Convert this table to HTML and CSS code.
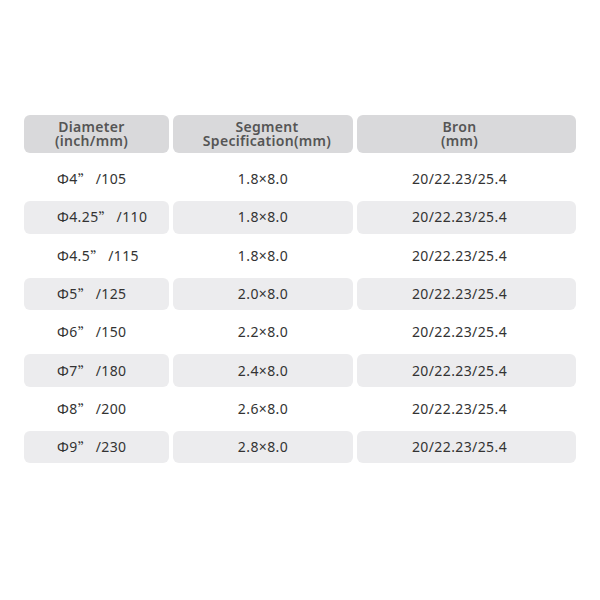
FILE: index.html
```html
<!DOCTYPE html>
<html>
<head>
<meta charset="utf-8">
<link rel="stylesheet" href="styles.css">
</head>
<body>
<div class="page">
  <div class="table">
    <div class="row head">
      <div class="cell c1"><span class="ln">Diameter</span><span class="ln">(inch/mm)</span></div>
      <div class="cell c2"><span class="ln">Segment</span><span class="ln">Specification(mm)</span></div>
      <div class="cell c3"><span class="ln">Bron</span><span class="ln">(mm)</span></div>
    </div>
    <div class="row">
      <div class="cell c1">Φ4<span class="q">”</span>/105</div>
      <div class="cell c2">1.8×8.0</div>
      <div class="cell c3">20/22.23/25.4</div>
    </div>
    <div class="row alt">
      <div class="cell c1">Φ4.25<span class="q">”</span>/110</div>
      <div class="cell c2">1.8×8.0</div>
      <div class="cell c3">20/22.23/25.4</div>
    </div>
    <div class="row">
      <div class="cell c1">Φ4.5<span class="q">”</span>/115</div>
      <div class="cell c2">1.8×8.0</div>
      <div class="cell c3">20/22.23/25.4</div>
    </div>
    <div class="row alt">
      <div class="cell c1">Φ5<span class="q">”</span>/125</div>
      <div class="cell c2">2.0×8.0</div>
      <div class="cell c3">20/22.23/25.4</div>
    </div>
    <div class="row">
      <div class="cell c1">Φ6<span class="q">”</span>/150</div>
      <div class="cell c2">2.2×8.0</div>
      <div class="cell c3">20/22.23/25.4</div>
    </div>
    <div class="row alt">
      <div class="cell c1">Φ7<span class="q">”</span>/180</div>
      <div class="cell c2">2.4×8.0</div>
      <div class="cell c3">20/22.23/25.4</div>
    </div>
    <div class="row">
      <div class="cell c1">Φ8<span class="q">”</span>/200</div>
      <div class="cell c2">2.6×8.0</div>
      <div class="cell c3">20/22.23/25.4</div>
    </div>
    <div class="row alt">
      <div class="cell c1">Φ9<span class="q">”</span>/230</div>
      <div class="cell c2">2.8×8.0</div>
      <div class="cell c3">20/22.23/25.4</div>
    </div>
  </div>
</div>
</body>
</html>
```
FILE: styles.css
```css
html, body {
  margin: 0;
  padding: 0;
  background: #ffffff;
}
.page {
  width: 600px;
  height: 600px;
  padding: 115px 24px 0 24px;
  box-sizing: border-box;
  font-family: "Noto Sans", "Open Sans", sans-serif;
  font-size: 14px;
  letter-spacing: 0.4px;
  color: #333333;
}
.table {
  display: flex;
  flex-direction: column;
  gap: 6px;
}
.row {
  display: grid;
  grid-template-columns: 145px 180px 219px;
  column-gap: 4px;
  height: 32.3px;
}
.row.head {
  height: 38px;
  margin-bottom: 4px;
}
.cell {
  display: flex;
  align-items: center;
  justify-content: center;
  border-radius: 6px;
  line-height: 16px;
  white-space: nowrap;
}
.head .cell {
  background: #d9d9db;
  color: #555555;
  font-weight: 600;
  text-align: center;
  flex-direction: column;
  letter-spacing: 0.3px;
}
.ln {
  display: block;
  line-height: 14px;
}
.alt .cell {
  background: #ececee;
}
.row:not(.head) .c1 {
  justify-content: flex-start;
  padding-left: 33px;
}
.head .c1 {
  padding-right: 10px;
}
.head .c2 {
  padding-left: 8px;
}
.c3 {
  padding-right: 14px;
}
.q {
  font-family: "Noto Sans CJK SC", sans-serif;
  display: inline-block;
  width: 18px;
  text-align: left;
}
```
